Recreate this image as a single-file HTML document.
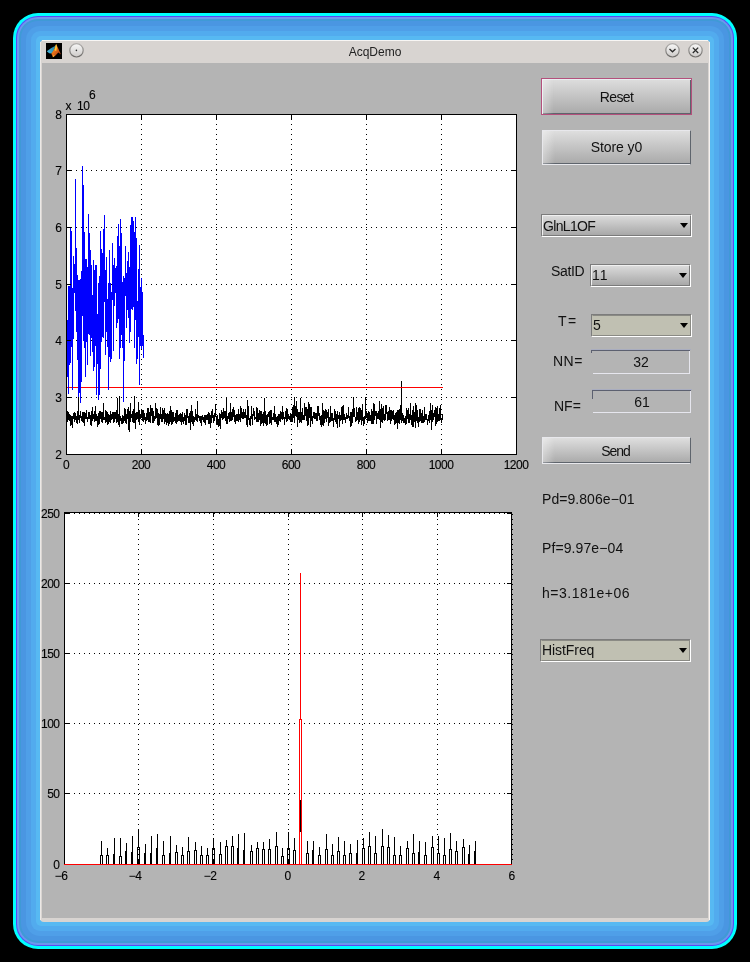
<!DOCTYPE html>
<html><head><meta charset="utf-8"><title>AcqDemo</title>
<style>
html,body{margin:0;padding:0;width:750px;height:962px;overflow:hidden;background:#000;}
body{position:relative;font-family:"Liberation Sans",sans-serif;}
.abs{position:absolute;}
.nolcd{will-change:transform;}
#glow{left:13px;top:13px;width:724px;height:936px;border-radius:25px;background:#00ffff;}
#glow2{left:3px;top:3px;right:3px;bottom:3px;border-radius:22px;background:#5a48f4;}
#glow3{left:1px;top:1px;right:1px;bottom:1px;border-radius:21px;background:#6c96ee;}
#glow4{left:2px;top:2px;right:2px;bottom:2px;border-radius:19px;background:#3f9ad6;}
#glow5{left:2px;top:2px;right:2px;bottom:2px;border-radius:17px;background:#4a96e2;}
#glow6{left:5px;top:5px;right:5px;bottom:5px;border-radius:14px;background:#4f9fe8;}
#glow7{left:5px;top:5px;right:5px;bottom:5px;border-radius:9px;background:#52abee;}
#glow8{left:5px;top:5px;right:5px;bottom:5px;border-radius:5px;background:#57b9f2;}
#frame{left:40px;top:40px;width:670px;height:882px;background:#d8d4d1;border-radius:4px;}
#frame::before{content:"";position:absolute;left:2px;right:2px;top:0;height:1px;background:#f8f6f4;}
#frame::after{content:"";position:absolute;left:0;right:0;top:2px;bottom:2px;border-left:1px solid #ece8e5;border-right:1px solid #f6f2f0;}
#title{left:0;top:1px;width:670px;height:23px;text-align:center;font-size:12px;line-height:22px;color:#222;}
#content{left:42px;top:63px;width:666px;height:855px;background:#b4b4b4;}
.plots{position:absolute;left:0;top:0;}
.g{stroke:#000;stroke-width:1;stroke-dasharray:1 4;shape-rendering:crispEdges;}
.gh{stroke:#000;stroke-width:1;stroke-dasharray:1 4;shape-rendering:crispEdges;}
.t{stroke:#000;stroke-width:1;shape-rendering:crispEdges;}
.lab text{font-family:"Liberation Sans",sans-serif;font-size:12px;letter-spacing:-0.5px;fill:#000;stroke:#000;stroke-width:0.12px;}
.btn{position:absolute;box-sizing:border-box;background:linear-gradient(#dedede,#a9a9a9);border-left:1px solid #e8e8ec;border-top:1px solid #e8e8ec;border-bottom:1px solid #5e646c;border-right:1px solid #5e646c;font-size:13px;color:#111;text-align:center;}
.btn::after{content:"";position:absolute;left:0;top:0;bottom:0;width:12px;background:linear-gradient(90deg,rgba(255,255,255,0.35),rgba(255,255,255,0));}
.pop{position:absolute;box-sizing:border-box;border-top:1px solid #7c7c7c;border-left:1px solid #7c7c7c;border-bottom:1px solid #fff;border-right:1px solid #fff;}
.pop .in{position:absolute;left:0;top:0;right:0;bottom:0;border-top:1px solid #f0f0f0;border-left:1px solid #f0f0f0;border-bottom:1px solid #7a7a7a;border-right:1px solid #7a7a7a;background:linear-gradient(#dadada,#a8a8a8);}
.pop.flat .in{background:#c0c0b2;border-top:1px solid #8a8a84;border-left:1px solid #c0c0b2;border-bottom:1px solid #8a8a84;border-right:1px solid #8a8a84;}
.pop .tx{position:absolute;left:2px;top:2px;font-size:13px;color:#000;line-height:14px;}
.arr{position:absolute;width:0;height:0;border-left:4.5px solid transparent;border-right:4.5px solid transparent;border-top:5px solid #000;}
.lbl{position:absolute;font-size:14px;color:#111;line-height:14px;white-space:nowrap;}
.bt{position:absolute;left:0;right:0;font-size:14px;line-height:14px;color:#111;text-align:center;white-space:nowrap;}
.edit{position:absolute;box-sizing:border-box;}
</style></head><body>
<div id="glow" class="abs"><div id="glow2" class="abs"><div id="glow3" class="abs"><div id="glow4" class="abs"><div id="glow5" class="abs"><div id="glow6" class="abs"><div id="glow7" class="abs"><div id="glow8" class="abs"></div></div></div></div></div></div></div></div>
<div id="frame" class="abs">
  <div id="title" class="abs nolcd">AcqDemo</div>
</div>
<!-- matlab icon -->
<svg class="abs" style="left:46px;top:43px" width="16" height="16" viewBox="0 0 16 16">
<defs>
<linearGradient id="og" x1="0" y1="0" x2="1" y2="1"><stop offset="0" stop-color="#ffd030"/><stop offset="0.45" stop-color="#e8701a"/><stop offset="1" stop-color="#a02808"/></linearGradient>
<linearGradient id="bg" x1="0" y1="1" x2="1" y2="0"><stop offset="0" stop-color="#48c0e8"/><stop offset="1" stop-color="#1e6e90"/></linearGradient>
</defs>
<rect width="16" height="16" fill="#000"/>
<path d="M0.8,8.3 L5.3,5.1 L9,3 L10.1,1.4 L8,7.3 L5.3,10.5 L3.2,10.3 Z" fill="url(#bg)"/>
<path d="M10.1,1.1 L12,5 L15,11.5 L12.3,9.4 L9.5,12.5 L6.9,14.2 L5.3,10.5 L8,6.7 Z" fill="url(#og)"/>
<path d="M10.1,1.1 L10.9,4 L10.2,8 L8.6,7.2 Z" fill="#ffd23a"/>
<path d="M6.9,14.2 L7.3,12.2 L8.8,12.8 Z" fill="#ffd040"/>
</svg>
<!-- title buttons -->
<svg class="abs" style="left:62px;top:40px" width="30" height="22" viewBox="0 0 30 22">
<defs><linearGradient id="cg" x1="0" y1="0" x2="0" y2="1"><stop offset="0" stop-color="#f8f8f8"/><stop offset="1" stop-color="#cdcac8"/></linearGradient>
<linearGradient id="cs" x1="0" y1="0" x2="0" y2="1"><stop offset="0" stop-color="#b0aeac"/><stop offset="1" stop-color="#6c6a68"/></linearGradient></defs>
<circle cx="14.5" cy="10.3" r="6.7" fill="url(#cg)" stroke="url(#cs)" stroke-width="1.2"/>
<circle cx="14.4" cy="10.4" r="0.8" fill="#333"/>
</svg>
<svg class="abs" style="left:660px;top:40px" width="48" height="22" viewBox="0 0 48 22">
<defs><linearGradient id="cg2" x1="0" y1="0" x2="0" y2="1"><stop offset="0" stop-color="#f8f8f8"/><stop offset="1" stop-color="#cdcac8"/></linearGradient>
<linearGradient id="cs2" x1="0" y1="0" x2="0" y2="1"><stop offset="0" stop-color="#b0aeac"/><stop offset="1" stop-color="#6c6a68"/></linearGradient></defs>
<circle cx="12.5" cy="10.3" r="6.7" fill="url(#cg2)" stroke="url(#cs2)" stroke-width="1.2"/>
<path d="M9.5,9 L12.5,11.8 L15.5,9" fill="none" stroke="#2a2a2a" stroke-width="1.3"/>
<circle cx="35.5" cy="10.3" r="6.7" fill="url(#cg2)" stroke="url(#cs2)" stroke-width="1.2"/>
<path d="M32.8,7.6 L38.2,13 M38.2,7.6 L32.8,13" fill="none" stroke="#2a2a2a" stroke-width="1.3"/>
</svg>
<div id="content" class="abs"></div>
<div class="nolcd abs" style="left:0;top:0;width:750px;height:962px"><svg class="plots" width="750" height="962" viewBox="0 0 750 962"><rect x="66" y="114" width="450" height="340" fill="#fff"/><rect x="64" y="512" width="447" height="352" fill="#fff"/><line x1="141.5" y1="114" x2="141.5" y2="454" class="g"/><line x1="216.5" y1="114" x2="216.5" y2="454" class="g"/><line x1="291.5" y1="114" x2="291.5" y2="454" class="g"/><line x1="366.5" y1="114" x2="366.5" y2="454" class="g"/><line x1="441.5" y1="114" x2="441.5" y2="454" class="g"/><line x1="66" y1="397.5" x2="516" y2="397.5" class="gh"/><line x1="66" y1="340.5" x2="516" y2="340.5" class="gh"/><line x1="66" y1="284.5" x2="516" y2="284.5" class="gh"/><line x1="66" y1="227.5" x2="516" y2="227.5" class="gh"/><line x1="66" y1="170.5" x2="516" y2="170.5" class="gh"/><polyline points="66.3,417.2 66.5,415.8 66.8,418.4 67.0,421.1 67.3,419.2 67.5,421.5 67.8,416.9 68.0,411.2 68.3,419.3 68.5,419.9 68.8,415.0 69.0,415.6 69.3,416.7 69.5,421.3 69.8,417.3 70.0,414.1 70.3,423.1 70.5,419.2 70.8,425.6 71.0,422.9 71.3,425.3 71.5,418.2 71.8,422.8 72.0,416.0 72.3,416.5 72.5,418.0 72.8,428.3 73.0,419.5 73.3,417.4 73.5,416.7 73.8,413.1 74.0,419.3 74.3,421.5 74.5,420.7 74.8,412.5 75.0,413.7 75.3,417.3 75.5,413.3 75.8,419.7 76.0,417.7 76.3,416.7 76.6,416.9 76.8,422.6 77.1,416.8 77.3,411.2 77.6,424.0 77.8,413.4 78.1,416.6 78.3,420.0 78.6,393.5 78.8,413.8 79.1,422.5 79.3,416.8 79.6,414.6 79.8,418.0 80.1,414.1 80.3,417.5 80.6,414.2 80.8,410.8 81.1,420.2 81.3,416.3 81.6,419.2 81.8,416.6 82.1,422.4 82.3,419.7 82.6,418.0 82.8,413.2 83.1,412.1 83.3,423.0 83.6,420.7 83.8,414.3 84.1,426.0 84.3,419.2 84.6,417.6 84.8,411.6 85.1,414.1 85.3,418.6 85.6,418.8 85.8,418.3 86.1,410.4 86.4,419.1 86.6,418.5 86.9,415.6 87.1,417.7 87.4,418.0 87.6,422.1 87.9,417.2 88.1,419.1 88.4,412.0 88.6,414.3 88.9,412.4 89.1,414.2 89.4,418.7 89.6,412.5 89.9,417.2 90.1,414.6 90.4,422.9 90.6,415.6 90.9,424.6 91.1,426.2 91.4,418.5 91.6,421.1 91.9,416.4 92.1,407.2 92.4,420.8 92.6,419.9 92.9,416.3 93.1,415.0 93.4,417.9 93.6,418.1 93.9,414.1 94.1,414.9 94.4,421.7 94.6,417.5 94.9,417.0 95.1,405.9 95.4,416.0 95.6,421.0 95.9,412.9 96.2,416.3 96.4,416.8 96.7,419.8 96.9,417.7 97.2,426.0 97.4,422.2 97.7,415.6 97.9,426.6 98.2,413.4 98.4,424.9 98.7,413.8 98.9,420.9 99.2,413.7 99.4,416.6 99.7,424.0 99.9,411.6 100.2,410.8 100.4,417.5 100.7,418.4 100.9,417.9 101.2,421.5 101.4,412.3 101.7,414.4 101.9,417.4 102.2,420.7 102.4,419.9 102.7,422.8 102.9,411.6 103.2,417.8 103.4,412.9 103.7,402.8 103.9,420.2 104.2,418.6 104.4,419.6 104.7,417.1 104.9,418.8 105.2,418.5 105.4,423.3 105.7,420.7 105.9,409.9 106.2,420.1 106.5,421.8 106.7,415.7 107.0,410.9 107.2,423.6 107.5,418.1 107.7,420.0 108.0,425.0 108.2,413.9 108.5,417.3 108.7,416.9 109.0,420.5 109.2,415.2 109.5,419.6 109.7,417.8 110.0,422.1 110.2,422.5 110.5,411.3 110.7,419.4 111.0,415.9 111.2,417.3 111.5,419.1 111.7,419.4 112.0,414.4 112.2,418.5 112.5,417.8 112.7,417.1 113.0,412.0 113.2,414.2 113.5,415.5 113.7,419.7 114.0,423.3 114.2,413.0 114.5,412.9 114.7,417.8 115.0,414.8 115.2,413.7 115.5,413.5 115.7,413.1 116.0,419.2 116.2,410.5 116.5,422.7 116.8,413.4 117.0,415.0 117.3,413.3 117.5,398.4 117.8,410.6 118.0,422.2 118.3,424.6 118.5,413.6 118.8,421.7 119.0,417.2 119.3,396.1 119.5,424.4 119.8,426.5 120.0,416.0 120.3,417.0 120.5,418.3 120.8,417.0 121.0,421.0 121.3,423.9 121.5,417.9 121.8,421.5 122.0,424.4 122.3,414.9 122.5,417.4 122.8,415.4 123.0,421.5 123.3,420.1 123.5,421.6 123.8,421.1 124.0,416.3 124.3,420.6 124.5,415.6 124.8,415.7 125.0,408.2 125.3,423.3 125.5,413.2 125.8,417.6 126.0,417.2 126.3,423.6 126.6,419.2 126.8,413.9 127.1,417.5 127.3,416.8 127.6,418.5 127.8,412.1 128.1,407.0 128.3,426.9 128.6,420.2 128.8,425.9 129.1,431.5 129.3,419.5 129.6,411.3 129.8,417.0 130.1,422.3 130.3,403.5 130.6,412.2 130.8,416.5 131.1,417.0 131.3,417.4 131.6,417.0 131.8,413.6 132.1,414.7 132.3,416.2 132.6,421.8 132.8,414.9 133.1,409.5 133.3,412.3 133.6,422.8 133.8,417.8 134.1,417.2 134.3,423.0 134.6,409.6 134.8,395.6 135.1,419.2 135.3,413.8 135.6,415.5 135.8,428.7 136.1,416.1 136.4,417.4 136.6,416.8 136.9,412.4 137.1,418.4 137.4,418.0 137.6,411.9 137.9,415.7 138.1,417.2 138.4,402.5 138.6,419.6 138.9,418.9 139.1,425.2 139.4,410.2 139.6,412.9 139.9,413.1 140.1,414.2 140.4,416.7 140.6,416.2 140.9,418.3 141.1,418.1 141.4,416.9 141.6,410.5 141.9,414.7 142.1,417.4 142.4,419.7 142.6,420.0 142.9,410.1 143.1,414.9 143.4,410.0 143.6,418.7 143.9,422.1 144.1,417.5 144.4,413.3 144.6,418.9 144.9,418.2 145.1,418.1 145.4,416.7 145.6,424.2 145.9,418.2 146.1,420.9 146.4,413.3 146.7,420.6 146.9,414.6 147.2,410.4 147.4,408.1 147.7,419.8 147.9,416.3 148.2,417.2 148.4,421.6 148.7,415.1 148.9,408.3 149.2,418.3 149.4,418.1 149.7,421.8 149.9,415.8 150.2,422.7 150.4,422.1 150.7,411.5 150.9,404.6 151.2,412.4 151.4,410.4 151.7,416.0 151.9,414.7 152.2,408.5 152.4,418.0 152.7,419.8 152.9,423.1 153.2,417.0 153.4,410.6 153.7,412.9 153.9,421.3 154.2,420.9 154.4,419.4 154.7,415.9 154.9,418.1 155.2,416.2 155.4,415.9 155.7,418.5 155.9,403.3 156.2,416.3 156.5,417.5 156.7,414.9 157.0,408.9 157.2,414.6 157.5,416.9 157.7,424.6 158.0,415.5 158.2,425.8 158.5,423.4 158.7,413.4 159.0,414.0 159.2,417.8 159.5,424.7 159.7,418.8 160.0,420.2 160.2,414.4 160.5,407.2 160.7,416.2 161.0,413.3 161.2,422.3 161.5,417.4 161.7,417.9 162.0,422.3 162.2,408.4 162.5,422.3 162.7,412.3 163.0,412.5 163.2,412.4 163.5,419.3 163.7,409.8 164.0,417.8 164.2,418.9 164.5,418.7 164.7,408.4 165.0,423.5 165.2,413.7 165.5,418.0 165.7,416.2 166.0,412.7 166.2,424.8 166.5,420.6 166.8,416.4 167.0,415.4 167.3,418.8 167.5,412.6 167.8,416.2 168.0,422.5 168.3,421.3 168.5,413.6 168.8,415.1 169.0,425.6 169.3,411.2 169.5,414.5 169.8,411.2 170.0,418.9 170.3,418.5 170.5,422.1 170.8,406.0 171.0,417.9 171.3,410.1 171.5,420.0 171.8,416.4 172.0,424.6 172.3,418.9 172.5,412.8 172.8,422.7 173.0,412.4 173.3,415.7 173.5,421.8 173.8,411.8 174.0,419.2 174.3,417.4 174.5,419.5 174.8,420.8 175.0,418.5 175.3,421.7 175.5,422.9 175.8,417.4 176.0,413.3 176.3,423.9 176.6,410.4 176.8,420.0 177.1,421.5 177.3,413.4 177.6,419.5 177.8,410.5 178.1,420.6 178.3,415.5 178.6,418.2 178.8,420.5 179.1,414.6 179.3,417.9 179.6,414.5 179.8,417.4 180.1,422.0 180.3,417.6 180.6,416.9 180.8,412.9 181.1,421.2 181.3,417.3 181.6,424.8 181.8,414.3 182.1,421.9 182.3,415.0 182.6,417.4 182.8,412.3 183.1,423.9 183.3,422.0 183.6,420.5 183.8,422.2 184.1,415.5 184.3,420.7 184.6,413.2 184.8,414.6 185.1,420.5 185.3,415.3 185.6,421.5 185.8,422.5 186.1,425.3 186.3,408.9 186.6,418.6 186.9,416.1 187.1,417.3 187.4,416.5 187.6,416.9 187.9,408.7 188.1,421.8 188.4,415.9 188.6,421.6 188.9,423.1 189.1,413.9 189.4,413.5 189.6,421.4 189.9,423.3 190.1,418.7 190.4,411.0 190.6,429.6 190.9,414.8 191.1,421.9 191.4,412.6 191.6,405.1 191.9,418.4 192.1,423.8 192.4,421.5 192.6,411.0 192.9,413.5 193.1,418.9 193.4,421.0 193.6,425.5 193.9,418.9 194.1,417.3 194.4,417.5 194.6,417.6 194.9,422.1 195.1,417.5 195.4,417.3 195.6,411.5 195.9,408.9 196.1,417.8 196.4,420.6 196.7,417.5 196.9,419.9 197.2,420.4 197.4,401.5 197.7,421.8 197.9,414.5 198.2,417.6 198.4,416.1 198.7,418.0 198.9,415.1 199.2,421.4 199.4,418.2 199.7,419.6 199.9,416.1 200.2,417.2 200.4,423.2 200.7,416.9 200.9,423.1 201.2,419.9 201.4,418.5 201.7,426.3 201.9,416.8 202.2,416.5 202.4,417.9 202.7,419.0 202.9,418.8 203.2,421.5 203.4,418.4 203.7,419.6 203.9,416.8 204.2,422.5 204.4,416.1 204.7,416.5 204.9,417.8 205.2,419.1 205.4,414.7 205.7,424.5 205.9,415.1 206.2,416.1 206.4,415.9 206.7,415.5 207.0,420.1 207.2,418.3 207.5,414.4 207.7,415.3 208.0,416.3 208.2,423.9 208.5,414.8 208.7,412.0 209.0,412.7 209.2,416.1 209.5,424.1 209.7,413.0 210.0,417.8 210.2,428.4 210.5,415.5 210.7,416.1 211.0,422.9 211.2,420.0 211.5,411.5 211.7,418.8 212.0,416.0 212.2,409.4 212.5,410.1 212.7,417.6 213.0,418.2 213.2,422.7 213.5,420.2 213.7,415.3 214.0,415.4 214.2,416.7 214.5,412.8 214.7,420.6 215.0,417.4 215.2,413.9 215.5,414.6 215.7,403.9 216.0,415.4 216.2,418.5 216.5,415.6 216.8,421.6 217.0,424.4 217.3,414.6 217.5,417.4 217.8,415.8 218.0,424.7 218.3,418.8 218.5,419.8 218.8,421.0 219.0,427.1 219.3,418.6 219.5,413.2 219.8,415.5 220.0,419.8 220.3,417.2 220.5,413.8 220.8,429.4 221.0,417.7 221.3,414.8 221.5,414.2 221.8,409.6 222.0,412.1 222.3,415.8 222.5,415.8 222.8,413.7 223.0,419.6 223.3,417.3 223.5,413.2 223.8,408.5 224.0,417.9 224.3,417.4 224.5,416.3 224.8,411.2 225.0,417.3 225.3,410.7 225.5,421.4 225.8,418.0 226.0,418.0 226.3,402.4 226.5,398.4 226.8,423.8 227.1,421.2 227.3,415.7 227.6,420.1 227.8,423.9 228.1,412.6 228.3,415.0 228.6,415.0 228.8,419.3 229.1,412.6 229.3,418.2 229.6,412.3 229.8,421.2 230.1,420.9 230.3,416.3 230.6,420.3 230.8,403.5 231.1,416.0 231.3,421.2 231.6,416.8 231.8,418.7 232.1,413.1 232.3,420.0 232.6,411.1 232.8,411.8 233.1,407.3 233.3,408.3 233.6,416.9 233.8,416.2 234.1,410.4 234.3,417.7 234.6,421.5 234.8,416.7 235.1,415.2 235.3,420.8 235.6,424.4 235.8,423.5 236.1,414.2 236.3,420.5 236.6,417.8 236.8,416.2 237.1,414.4 237.4,418.6 237.6,415.0 237.9,421.1 238.1,409.2 238.4,421.7 238.6,412.2 238.9,417.3 239.1,420.4 239.4,418.7 239.6,418.1 239.9,414.1 240.1,417.5 240.4,421.8 240.6,418.8 240.9,406.0 241.1,412.9 241.4,417.7 241.6,414.0 241.9,408.1 242.1,418.2 242.4,418.8 242.6,411.8 242.9,415.0 243.1,414.2 243.4,419.4 243.6,408.7 243.9,409.6 244.1,414.7 244.4,414.1 244.6,418.0 244.9,414.3 245.1,418.0 245.4,415.2 245.6,414.2 245.9,409.3 246.1,424.6 246.4,415.5 246.6,420.4 246.9,418.6 247.2,419.8 247.4,411.5 247.7,427.4 247.9,400.3 248.2,416.0 248.4,412.3 248.7,408.4 248.9,417.1 249.2,425.1 249.4,421.1 249.7,422.5 249.9,419.4 250.2,416.8 250.4,426.0 250.7,415.7 250.9,423.8 251.2,406.1 251.4,417.7 251.7,418.6 251.9,417.5 252.2,419.6 252.4,419.9 252.7,424.6 252.9,417.3 253.2,409.0 253.4,408.4 253.7,411.3 253.9,414.0 254.2,420.2 254.4,410.8 254.7,417.4 254.9,417.5 255.2,418.5 255.4,416.8 255.7,419.1 255.9,417.5 256.2,422.0 256.4,418.8 256.7,407.1 257.0,417.5 257.2,418.2 257.5,408.0 257.7,414.0 258.0,422.1 258.2,418.1 258.5,413.1 258.7,416.0 259.0,416.6 259.2,410.3 259.5,420.2 259.7,416.8 260.0,419.5 260.2,410.6 260.5,425.8 260.7,412.9 261.0,419.5 261.2,414.2 261.5,414.5 261.7,411.0 262.0,424.1 262.2,413.8 262.5,418.5 262.7,420.1 263.0,414.8 263.2,412.0 263.5,426.3 263.7,418.8 264.0,423.8 264.2,420.0 264.5,398.3 264.7,415.8 265.0,410.2 265.2,418.0 265.5,423.9 265.7,420.5 266.0,421.2 266.2,422.5 266.5,415.2 266.7,420.0 267.0,425.9 267.3,414.1 267.5,417.7 267.8,415.6 268.0,416.7 268.3,414.4 268.5,417.0 268.8,411.7 269.0,415.3 269.3,415.4 269.5,415.4 269.8,423.6 270.0,411.3 270.3,418.3 270.5,416.2 270.8,423.2 271.0,409.9 271.3,416.7 271.5,422.5 271.8,424.7 272.0,418.4 272.3,417.6 272.5,420.3 272.8,416.8 273.0,420.0 273.3,414.7 273.5,420.4 273.8,417.3 274.0,412.8 274.3,405.8 274.5,421.6 274.8,419.2 275.0,420.9 275.3,413.7 275.5,422.2 275.8,419.3 276.0,417.3 276.3,421.5 276.5,421.4 276.8,419.3 277.1,426.5 277.3,423.6 277.6,419.0 277.8,416.5 278.1,418.0 278.3,425.0 278.6,419.2 278.8,413.6 279.1,414.7 279.3,417.5 279.6,421.1 279.8,414.4 280.1,419.7 280.3,422.3 280.6,420.7 280.8,410.8 281.1,416.2 281.3,412.0 281.6,419.3 281.8,413.0 282.1,419.8 282.3,417.9 282.6,406.2 282.8,413.8 283.1,419.4 283.3,417.5 283.6,415.7 283.8,411.8 284.1,419.3 284.3,424.9 284.6,418.4 284.8,417.1 285.1,416.7 285.3,411.3 285.6,411.1 285.8,413.6 286.1,422.0 286.3,413.3 286.6,407.9 286.8,413.8 287.1,416.0 287.4,416.5 287.6,409.3 287.9,421.3 288.1,417.7 288.4,415.1 288.6,413.9 288.9,419.1 289.1,415.8 289.4,418.4 289.6,416.6 289.9,417.8 290.1,422.2 290.4,417.3 290.6,413.3 290.9,421.4 291.1,418.2 291.4,414.2 291.6,421.9 291.9,416.4 292.1,421.9 292.4,412.2 292.6,406.9 292.9,408.2 293.1,418.1 293.4,413.9 293.6,416.6 293.9,416.7 294.1,396.6 294.4,423.0 294.6,407.7 294.9,417.4 295.1,410.9 295.4,416.3 295.6,406.0 295.9,415.9 296.1,413.9 296.4,417.0 296.6,415.0 296.9,401.4 297.2,426.6 297.4,413.2 297.7,414.1 297.9,408.6 298.2,416.9 298.4,412.6 298.7,419.2 298.9,420.3 299.2,418.0 299.4,411.9 299.7,423.3 299.9,411.9 300.2,420.0 300.4,422.0 300.7,398.3 300.9,417.6 301.2,422.9 301.4,418.8 301.7,413.1 301.9,411.9 302.2,419.1 302.4,415.4 302.7,407.8 302.9,420.0 303.2,415.6 303.4,417.3 303.7,419.5 303.9,419.3 304.2,406.9 304.4,417.0 304.7,419.7 304.9,403.1 305.2,412.2 305.4,416.2 305.7,413.3 305.9,411.9 306.2,414.6 306.4,407.1 306.7,420.8 306.9,413.6 307.2,418.6 307.5,409.0 307.7,409.7 308.0,425.8 308.2,421.4 308.5,414.2 308.7,413.7 309.0,402.2 309.2,417.5 309.5,415.2 309.7,414.3 310.0,417.5 310.2,407.2 310.5,427.2 310.7,414.4 311.0,421.7 311.2,412.9 311.5,418.2 311.7,406.6 312.0,415.5 312.2,421.2 312.5,421.2 312.7,424.1 313.0,417.3 313.2,415.0 313.5,412.6 313.7,417.8 314.0,412.5 314.2,417.1 314.5,417.6 314.7,414.6 315.0,412.5 315.2,418.7 315.5,418.2 315.7,417.9 316.0,416.8 316.2,421.1 316.5,412.6 316.7,418.9 317.0,415.1 317.2,420.8 317.5,415.6 317.8,415.4 318.0,405.6 318.3,408.2 318.5,415.5 318.8,409.3 319.0,412.9 319.3,420.1 319.5,418.9 319.8,415.2 320.0,416.9 320.3,416.9 320.5,418.4 320.8,425.2 321.0,418.2 321.3,427.0 321.5,415.5 321.8,420.4 322.0,420.3 322.3,418.1 322.5,402.6 322.8,423.5 323.0,424.9 323.3,421.9 323.5,426.2 323.8,421.4 324.0,410.1 324.3,421.8 324.5,414.3 324.8,423.2 325.0,415.8 325.3,418.6 325.5,417.4 325.8,414.7 326.0,409.4 326.3,416.3 326.5,416.6 326.8,421.5 327.0,414.6 327.3,418.3 327.6,413.5 327.8,417.4 328.1,409.5 328.3,425.9 328.6,418.5 328.8,413.3 329.1,418.7 329.3,420.7 329.6,418.3 329.8,423.3 330.1,416.6 330.3,406.4 330.6,412.1 330.8,422.1 331.1,421.0 331.3,419.0 331.6,412.7 331.8,420.8 332.1,420.2 332.3,413.3 332.6,413.3 332.8,418.8 333.1,422.1 333.3,424.0 333.6,420.3 333.8,427.0 334.1,413.9 334.3,420.0 334.6,415.0 334.8,408.9 335.1,412.0 335.3,422.3 335.6,413.3 335.8,412.0 336.1,420.5 336.3,421.4 336.6,417.7 336.8,424.2 337.1,410.7 337.4,427.8 337.6,422.1 337.9,418.4 338.1,418.2 338.4,416.4 338.6,416.0 338.9,418.1 339.1,412.1 339.4,426.6 339.6,417.2 339.9,420.3 340.1,416.6 340.4,416.2 340.6,421.2 340.9,420.0 341.1,413.7 341.4,415.6 341.6,420.2 341.9,408.2 342.1,407.0 342.4,423.6 342.6,415.8 342.9,406.1 343.1,405.2 343.4,416.2 343.6,418.1 343.9,419.6 344.1,418.1 344.4,419.6 344.6,413.9 344.9,418.9 345.1,419.1 345.4,422.5 345.6,417.4 345.9,421.1 346.1,418.0 346.4,412.6 346.6,415.5 346.9,414.9 347.1,415.6 347.4,416.9 347.7,417.7 347.9,418.5 348.2,413.8 348.4,406.8 348.7,411.2 348.9,417.0 349.2,420.5 349.4,419.3 349.7,420.2 349.9,416.5 350.2,420.3 350.4,412.1 350.7,420.6 350.9,427.2 351.2,420.4 351.4,426.0 351.7,417.3 351.9,412.5 352.2,414.3 352.4,423.1 352.7,420.5 352.9,409.3 353.2,415.8 353.4,417.1 353.7,397.4 353.9,406.3 354.2,411.4 354.4,416.6 354.7,415.6 354.9,414.4 355.2,419.9 355.4,421.8 355.7,416.9 355.9,421.4 356.2,417.4 356.4,416.7 356.7,406.8 356.9,420.9 357.2,417.7 357.4,417.9 357.7,415.2 358.0,412.5 358.2,419.3 358.5,420.8 358.7,424.4 359.0,407.6 359.2,414.8 359.5,417.0 359.7,421.7 360.0,407.2 360.2,417.0 360.5,414.9 360.7,419.8 361.0,418.3 361.2,425.2 361.5,422.3 361.7,410.0 362.0,422.0 362.2,404.3 362.5,416.2 362.7,418.8 363.0,420.7 363.2,417.4 363.5,417.2 363.7,417.5 364.0,425.5 364.2,417.8 364.5,420.9 364.7,419.6 365.0,416.2 365.2,414.3 365.5,397.2 365.7,419.4 366.0,413.1 366.2,412.0 366.5,412.1 366.7,411.0 367.0,417.8 367.2,417.9 367.5,413.5 367.8,423.2 368.0,416.2 368.3,419.5 368.5,418.8 368.8,411.0 369.0,421.1 369.3,417.3 369.5,413.2 369.8,412.8 370.0,417.5 370.3,418.0 370.5,420.8 370.8,415.4 371.0,418.3 371.3,414.5 371.5,409.4 371.8,417.3 372.0,423.8 372.3,421.0 372.5,423.6 372.8,422.5 373.0,411.4 373.3,416.2 373.5,423.9 373.8,414.3 374.0,403.5 374.3,418.8 374.5,420.2 374.8,418.7 375.0,415.9 375.3,414.3 375.5,411.9 375.8,411.8 376.0,411.9 376.3,411.1 376.5,414.2 376.8,423.9 377.0,417.7 377.3,415.8 377.6,418.9 377.8,413.1 378.1,418.8 378.3,415.5 378.6,410.8 378.8,414.2 379.1,416.2 379.3,413.1 379.6,412.5 379.8,401.0 380.1,428.0 380.3,412.2 380.6,419.2 380.8,421.5 381.1,403.8 381.3,411.9 381.6,419.3 381.8,422.2 382.1,408.2 382.3,419.2 382.6,422.6 382.8,416.1 383.1,415.3 383.3,420.3 383.6,413.7 383.8,405.9 384.1,421.2 384.3,416.4 384.6,413.8 384.8,420.0 385.1,415.7 385.3,417.6 385.6,404.7 385.8,420.3 386.1,411.0 386.3,409.4 386.6,405.3 386.8,414.0 387.1,413.2 387.3,411.6 387.6,415.7 387.9,419.8 388.1,419.5 388.4,414.9 388.6,414.6 388.9,411.0 389.1,415.3 389.4,407.5 389.6,410.5 389.9,416.4 390.1,423.7 390.4,422.4 390.6,423.5 390.9,410.1 391.1,420.9 391.4,411.7 391.6,414.6 391.9,409.6 392.1,412.7 392.4,417.6 392.6,418.1 392.9,416.8 393.1,416.4 393.4,419.5 393.6,411.0 393.9,410.1 394.1,424.7 394.4,416.0 394.6,421.2 394.9,416.3 395.1,413.5 395.4,417.4 395.6,413.8 395.9,424.2 396.1,412.3 396.4,419.8 396.6,414.4 396.9,416.4 397.1,428.6 397.4,420.5 397.7,416.2 397.9,410.3 398.2,415.9 398.4,416.0 398.7,423.4 398.9,410.8 399.2,409.2 399.4,417.0 399.7,418.1 399.9,424.3 400.2,413.3 400.4,405.2 400.7,414.0 400.9,411.6 401.2,414.8 401.4,421.5 401.7,381.5 401.9,422.6 402.2,418.1 402.4,415.9 402.7,413.3 402.9,415.3 403.2,415.5 403.4,420.5 403.7,422.9 403.9,416.9 404.2,420.3 404.4,422.9 404.7,422.8 404.9,419.3 405.2,425.4 405.4,423.1 405.7,424.4 405.9,416.4 406.2,415.4 406.4,408.3 406.7,423.8 406.9,420.2 407.2,413.1 407.4,418.1 407.7,418.6 408.0,409.6 408.2,418.7 408.5,408.1 408.7,423.0 409.0,415.7 409.2,415.8 409.5,423.2 409.7,421.5 410.0,414.8 410.2,403.0 410.5,420.0 410.7,414.4 411.0,414.6 411.2,425.0 411.5,418.5 411.7,415.3 412.0,419.7 412.2,426.6 412.5,418.4 412.7,413.8 413.0,410.2 413.2,426.8 413.5,405.6 413.7,408.6 414.0,412.9 414.2,411.7 414.5,412.8 414.7,416.5 415.0,422.3 415.2,402.6 415.5,420.3 415.7,428.3 416.0,404.7 416.2,414.0 416.5,409.1 416.7,421.2 417.0,410.7 417.2,410.1 417.5,410.3 417.8,417.3 418.0,422.5 418.3,418.0 418.5,426.9 418.8,424.7 419.0,416.8 419.3,421.5 419.5,417.9 419.8,417.6 420.0,408.6 420.3,411.4 420.5,417.4 420.8,411.8 421.0,420.6 421.3,418.7 421.5,413.1 421.8,422.7 422.0,418.4 422.3,423.0 422.5,416.6 422.8,410.0 423.0,420.5 423.3,416.2 423.5,421.1 423.8,422.2 424.0,422.6 424.3,410.7 424.5,406.7 424.8,415.0 425.0,420.3 425.3,414.1 425.5,418.6 425.8,413.6 426.0,415.9 426.3,415.9 426.5,414.5 426.8,419.7 427.0,419.0 427.3,424.8 427.5,419.1 427.8,423.5 428.1,417.8 428.3,421.4 428.6,416.7 428.8,415.2 429.1,423.4 429.3,420.8 429.6,421.3 429.8,413.9 430.1,409.6 430.3,413.4 430.6,403.1 430.8,410.7 431.1,423.9 431.3,410.5 431.6,420.1 431.8,429.5 432.1,405.5 432.3,410.2 432.6,421.7 432.8,416.4 433.1,418.1 433.3,416.7 433.6,412.7 433.8,420.2 434.1,415.1 434.3,416.2 434.6,411.9 434.8,416.8 435.1,406.8 435.3,420.3 435.6,416.0 435.8,425.6 436.1,422.7 436.3,411.3 436.6,421.3 436.8,414.8 437.1,405.6 437.3,421.8 437.6,418.7 437.9,419.4 438.1,419.3 438.4,413.8 438.6,414.3 438.9,419.7 439.1,421.2 439.4,415.9 439.6,417.6 439.9,412.6 440.1,405.4 440.4,413.4 440.6,417.3 440.9,417.9 441.1,421.0 441.4,421.2 441.6,421.6 441.9,418.9 442.1,419.1 442.4,413.9 442.6,418.9 442.9,418.0" fill="none" stroke="#000" stroke-width="1" shape-rendering="crispEdges"/><line x1="66" y1="387.5" x2="443" y2="387.5" stroke="#f00" stroke-width="1" shape-rendering="crispEdges"/><polyline points="66.3,325.1 66.6,274.7 66.8,366.5 67.1,377.3 67.4,359.3 67.7,323.4 67.9,319.9 68.2,327.7 68.5,302.6 68.8,393.8 69.0,286.5 69.3,364.6 69.6,333.6 69.9,323.5 70.2,353.8 70.4,362.6 70.7,347.7 71.0,227.8 71.3,282.6 71.5,283.6 71.8,347.2 72.1,339.0 72.4,344.2 72.7,288.3 72.9,389.8 73.2,256.1 73.5,326.4 73.8,338.6 74.0,292.8 74.3,264.5 74.6,292.7 74.9,263.7 75.1,301.2 75.4,179.4 75.7,255.9 76.0,310.7 76.3,247.9 76.5,299.9 76.8,303.1 77.1,344.3 77.4,318.4 77.6,274.9 77.9,360.2 78.2,280.2 78.5,292.4 78.8,295.3 79.0,396.7 79.3,310.9 79.6,280.2 79.9,337.8 80.1,303.0 80.4,403.0 80.7,279.3 81.0,333.7 81.2,271.1 81.5,381.9 81.8,278.4 82.1,316.3 82.4,273.7 82.6,266.4 82.9,166.1 83.2,215.2 83.5,340.5 83.7,301.4 84.0,231.9 84.3,348.4 84.6,258.1 84.9,236.3 85.1,335.4 85.4,377.1 85.7,258.8 86.0,261.4 86.2,273.1 86.5,259.5 86.8,342.1 87.1,313.5 87.3,363.1 87.6,364.5 87.9,266.6 88.2,334.1 88.5,213.7 88.7,303.6 89.0,332.8 89.3,274.1 89.6,233.2 89.8,286.8 90.1,356.3 90.4,291.5 90.7,250.5 91.0,326.8 91.2,338.2 91.5,265.2 91.8,301.0 92.1,351.7 92.3,322.2 92.6,337.5 92.9,294.6 93.2,302.2 93.4,259.7 93.7,277.7 94.0,370.5 94.3,290.1 94.6,270.1 94.8,288.1 95.1,264.6 95.4,329.1 95.7,345.5 95.9,268.7 96.2,265.7 96.5,394.8 96.8,264.8 97.1,336.2 97.3,319.2 97.6,363.7 97.9,360.7 98.2,283.5 98.4,321.4 98.7,291.6 99.0,400.4 99.3,276.0 99.5,354.9 99.8,282.9 100.1,279.0 100.4,309.7 100.7,369.4 100.9,231.4 101.2,341.8 101.5,296.6 101.8,298.5 102.0,249.1 102.3,325.3 102.6,265.5 102.9,336.9 103.1,260.9 103.4,337.8 103.7,321.4 104.0,229.3 104.3,228.3 104.5,302.2 104.8,215.2 105.1,291.9 105.4,340.0 105.6,276.7 105.9,354.9 106.2,260.6 106.5,257.5 106.8,330.0 107.0,332.3 107.3,299.5 107.6,306.1 107.9,346.6 108.1,283.5 108.4,390.0 108.7,324.3 109.0,323.1 109.2,249.9 109.5,294.1 109.8,356.8 110.1,282.7 110.4,314.0 110.6,333.2 110.9,362.4 111.2,354.9 111.5,292.0 111.7,346.0 112.0,304.0 112.3,263.3 112.6,264.5 112.9,243.0 113.1,318.8 113.4,350.9 113.7,265.0 114.0,294.0 114.2,260.8 114.5,306.2 114.8,257.9 115.1,272.1 115.3,277.4 115.6,286.1 115.9,290.4 116.2,297.2 116.5,297.4 116.7,266.3 117.0,327.6 117.3,235.9 117.6,311.0 117.8,266.5 118.1,310.3 118.4,316.7 118.7,223.8 119.0,319.3 119.2,358.8 119.5,335.8 119.8,319.6 120.1,218.7 120.3,298.2 120.6,268.5 120.9,347.5 121.2,292.3 121.4,279.3 121.7,233.2 122.0,335.1 122.3,282.0 122.6,294.3 122.8,348.4 123.1,276.4 123.4,317.4 123.7,401.5 123.9,282.2 124.2,284.6 124.5,324.6 124.8,361.3 125.1,246.3 125.3,295.8 125.6,265.2 125.9,249.1 126.2,327.9 126.4,273.5 126.7,316.5 127.0,309.2 127.3,310.2 127.5,306.7 127.8,261.2 128.1,301.6 128.4,312.9 128.7,317.9 128.9,251.9 129.2,343.2 129.5,327.2 129.8,308.8 130.0,267.3 130.3,311.5 130.6,331.6 130.9,224.9 131.1,252.4 131.4,288.3 131.7,308.9 132.0,217.3 132.3,293.5 132.5,310.2 132.8,294.3 133.1,294.2 133.4,249.1 133.6,307.4 133.9,221.0 134.2,342.7 134.5,278.3 134.8,347.5 135.0,232.5 135.3,320.2 135.6,309.0 135.9,216.8 136.1,255.4 136.4,352.0 136.7,320.8 137.0,363.6 137.2,301.1 137.5,310.8 137.8,320.9 138.1,334.6 138.4,322.4 138.6,337.1 138.9,285.1 139.2,244.8 139.5,385.4 139.7,311.4 140.0,323.7 140.3,286.6 140.6,345.5 140.9,312.6 141.1,349.1 141.4,278.2 141.7,302.6 142.0,313.3 142.2,291.6 142.5,316.7 142.8,323.7 143.1,354.8 143.3,335.0 143.6,357.7" fill="none" stroke="#00f" stroke-width="1" shape-rendering="crispEdges"/><line x1="141.5" y1="454" x2="141.5" y2="449" class="t"/><line x1="141.5" y1="114" x2="141.5" y2="119" class="t"/><line x1="216.5" y1="454" x2="216.5" y2="449" class="t"/><line x1="216.5" y1="114" x2="216.5" y2="119" class="t"/><line x1="291.5" y1="454" x2="291.5" y2="449" class="t"/><line x1="291.5" y1="114" x2="291.5" y2="119" class="t"/><line x1="366.5" y1="454" x2="366.5" y2="449" class="t"/><line x1="366.5" y1="114" x2="366.5" y2="119" class="t"/><line x1="441.5" y1="454" x2="441.5" y2="449" class="t"/><line x1="441.5" y1="114" x2="441.5" y2="119" class="t"/><line x1="66" y1="397.5" x2="71" y2="397.5" class="t"/><line x1="516" y1="397.5" x2="511" y2="397.5" class="t"/><line x1="66" y1="340.5" x2="71" y2="340.5" class="t"/><line x1="516" y1="340.5" x2="511" y2="340.5" class="t"/><line x1="66" y1="284.5" x2="71" y2="284.5" class="t"/><line x1="516" y1="284.5" x2="511" y2="284.5" class="t"/><line x1="66" y1="227.5" x2="71" y2="227.5" class="t"/><line x1="516" y1="227.5" x2="511" y2="227.5" class="t"/><line x1="66" y1="170.5" x2="71" y2="170.5" class="t"/><line x1="516" y1="170.5" x2="511" y2="170.5" class="t"/><rect x="66.5" y="114.5" width="450" height="340" fill="none" stroke="#000" stroke-width="1" shape-rendering="crispEdges"/><line x1="138.5" y1="514" x2="138.5" y2="864" class="g"/><line x1="213.5" y1="514" x2="213.5" y2="864" class="g"/><line x1="288.5" y1="514" x2="288.5" y2="864" class="g"/><line x1="362.5" y1="514" x2="362.5" y2="864" class="g"/><line x1="437.5" y1="514" x2="437.5" y2="864" class="g"/><line x1="512.5" y1="514" x2="512.5" y2="864" class="g"/><line x1="64" y1="793.5" x2="513" y2="793.5" class="gh"/><line x1="64" y1="723.5" x2="513" y2="723.5" class="gh"/><line x1="64" y1="653.5" x2="513" y2="653.5" class="gh"/><line x1="64" y1="583.5" x2="513" y2="583.5" class="gh"/><line x1="64" y1="513.5" x2="513" y2="513.5" class="gh"/><g shape-rendering="crispEdges"><rect x="100.5" y="855.5" width="2" height="9" fill="none" stroke="#000"/><line x1="101.5" y1="841" x2="101.5" y2="856" stroke="#000"/><rect x="106.5" y="855.5" width="2" height="9" fill="none" stroke="#000"/><line x1="107.5" y1="848" x2="107.5" y2="856" stroke="#000"/><rect x="113" y="854" width="2" height="10" fill="#000"/><line x1="114.5" y1="838" x2="114.5" y2="854" stroke="#000"/><rect x="119.5" y="856.5" width="2" height="8" fill="none" stroke="#000"/><line x1="120.5" y1="838" x2="120.5" y2="857" stroke="#000"/><rect x="125" y="851" width="2" height="13" fill="#000"/><line x1="126.5" y1="843" x2="126.5" y2="852" stroke="#000"/><rect x="131" y="852" width="2" height="12" fill="#000"/><line x1="132.5" y1="836" x2="132.5" y2="853" stroke="#000"/><rect x="137.5" y="847.5" width="2" height="17" fill="none" stroke="#000"/><line x1="138.5" y1="829" x2="138.5" y2="848" stroke="#000"/><rect x="144" y="853" width="2" height="11" fill="#000"/><line x1="145.5" y1="844" x2="145.5" y2="853" stroke="#000"/><rect x="150" y="853" width="2" height="11" fill="#000"/><line x1="151.5" y1="836" x2="151.5" y2="854" stroke="#000"/><rect x="156" y="848" width="2" height="16" fill="#000"/><line x1="157.5" y1="834" x2="157.5" y2="849" stroke="#000"/><rect x="162.5" y="855.5" width="2" height="9" fill="none" stroke="#000"/><line x1="163.5" y1="841" x2="163.5" y2="856" stroke="#000"/><rect x="169" y="853" width="2" height="11" fill="#000"/><line x1="170.5" y1="836" x2="170.5" y2="854" stroke="#000"/><rect x="175.5" y="852.5" width="2" height="12" fill="none" stroke="#000"/><line x1="176.5" y1="845" x2="176.5" y2="853" stroke="#000"/><rect x="181.5" y="855.5" width="2" height="9" fill="none" stroke="#000"/><line x1="182.5" y1="847" x2="182.5" y2="856" stroke="#000"/><rect x="187.5" y="851.5" width="2" height="13" fill="none" stroke="#000"/><line x1="188.5" y1="837" x2="188.5" y2="852" stroke="#000"/><rect x="194.5" y="850.5" width="2" height="14" fill="none" stroke="#000"/><line x1="195.5" y1="842" x2="195.5" y2="851" stroke="#000"/><rect x="200.5" y="855.5" width="2" height="9" fill="none" stroke="#000"/><line x1="201.5" y1="846" x2="201.5" y2="856" stroke="#000"/><rect x="206.5" y="855.5" width="2" height="9" fill="none" stroke="#000"/><line x1="207.5" y1="848" x2="207.5" y2="856" stroke="#000"/><rect x="212.5" y="848.5" width="2" height="16" fill="none" stroke="#000"/><line x1="213.5" y1="838" x2="213.5" y2="849" stroke="#000"/><rect x="219.5" y="854.5" width="2" height="10" fill="none" stroke="#000"/><line x1="220.5" y1="842" x2="220.5" y2="855" stroke="#000"/><rect x="225.5" y="846.5" width="2" height="18" fill="none" stroke="#000"/><line x1="226.5" y1="840" x2="226.5" y2="847" stroke="#000"/><rect x="231.5" y="846.5" width="2" height="18" fill="none" stroke="#000"/><line x1="232.5" y1="836" x2="232.5" y2="847" stroke="#000"/><rect x="237" y="848" width="2" height="16" fill="#000"/><line x1="238.5" y1="834" x2="238.5" y2="849" stroke="#000"/><rect x="243" y="850" width="2" height="14" fill="#000"/><line x1="244.5" y1="833" x2="244.5" y2="851" stroke="#000"/><rect x="250.5" y="851.5" width="2" height="13" fill="none" stroke="#000"/><line x1="251.5" y1="845" x2="251.5" y2="852" stroke="#000"/><rect x="256.5" y="848.5" width="2" height="16" fill="none" stroke="#000"/><line x1="257.5" y1="842" x2="257.5" y2="849" stroke="#000"/><rect x="262.5" y="849.5" width="2" height="15" fill="none" stroke="#000"/><line x1="263.5" y1="842" x2="263.5" y2="850" stroke="#000"/><rect x="268.5" y="849.5" width="2" height="15" fill="none" stroke="#000"/><line x1="269.5" y1="839" x2="269.5" y2="850" stroke="#000"/><rect x="275.5" y="846.5" width="2" height="18" fill="none" stroke="#000"/><line x1="276.5" y1="832" x2="276.5" y2="847" stroke="#000"/><rect x="281.5" y="856.5" width="2" height="8" fill="none" stroke="#000"/><line x1="282.5" y1="848" x2="282.5" y2="857" stroke="#000"/><rect x="287.5" y="848.5" width="2" height="16" fill="none" stroke="#000"/><line x1="288.5" y1="832" x2="288.5" y2="849" stroke="#000"/><rect x="293.5" y="850.5" width="2" height="14" fill="none" stroke="#000"/><line x1="294.5" y1="838" x2="294.5" y2="851" stroke="#000"/><rect x="306.5" y="853.5" width="2" height="11" fill="none" stroke="#000"/><line x1="307.5" y1="841" x2="307.5" y2="854" stroke="#000"/><rect x="312" y="850" width="2" height="14" fill="#000"/><line x1="313.5" y1="841" x2="313.5" y2="850" stroke="#000"/><rect x="318.5" y="855.5" width="2" height="9" fill="none" stroke="#000"/><line x1="319.5" y1="847" x2="319.5" y2="856" stroke="#000"/><rect x="325.5" y="849.5" width="2" height="15" fill="none" stroke="#000"/><line x1="326.5" y1="834" x2="326.5" y2="850" stroke="#000"/><rect x="331.5" y="855.5" width="2" height="9" fill="none" stroke="#000"/><line x1="332.5" y1="844" x2="332.5" y2="856" stroke="#000"/><rect x="337.5" y="851.5" width="2" height="13" fill="none" stroke="#000"/><line x1="338.5" y1="837" x2="338.5" y2="852" stroke="#000"/><rect x="343.5" y="855.5" width="2" height="9" fill="none" stroke="#000"/><line x1="344.5" y1="841" x2="344.5" y2="856" stroke="#000"/><rect x="349.5" y="853.5" width="2" height="11" fill="none" stroke="#000"/><line x1="350.5" y1="844" x2="350.5" y2="854" stroke="#000"/><rect x="356" y="853" width="2" height="11" fill="#000"/><line x1="357.5" y1="840" x2="357.5" y2="854" stroke="#000"/><rect x="362.5" y="848.5" width="2" height="16" fill="none" stroke="#000"/><line x1="363.5" y1="838" x2="363.5" y2="849" stroke="#000"/><rect x="368.5" y="846.5" width="2" height="18" fill="none" stroke="#000"/><line x1="369.5" y1="832" x2="369.5" y2="847" stroke="#000"/><rect x="374.5" y="853.5" width="2" height="11" fill="none" stroke="#000"/><line x1="375.5" y1="836" x2="375.5" y2="854" stroke="#000"/><rect x="381.5" y="846.5" width="2" height="18" fill="none" stroke="#000"/><line x1="382.5" y1="829" x2="382.5" y2="847" stroke="#000"/><rect x="387.5" y="847.5" width="2" height="17" fill="none" stroke="#000"/><line x1="388.5" y1="835" x2="388.5" y2="848" stroke="#000"/><rect x="393.5" y="855.5" width="2" height="9" fill="none" stroke="#000"/><line x1="394.5" y1="837" x2="394.5" y2="856" stroke="#000"/><rect x="399.5" y="855.5" width="2" height="9" fill="none" stroke="#000"/><line x1="400.5" y1="846" x2="400.5" y2="856" stroke="#000"/><rect x="406.5" y="848.5" width="2" height="16" fill="none" stroke="#000"/><line x1="407.5" y1="841" x2="407.5" y2="849" stroke="#000"/><rect x="412.5" y="853.5" width="2" height="11" fill="none" stroke="#000"/><line x1="413.5" y1="834" x2="413.5" y2="854" stroke="#000"/><rect x="418" y="852" width="2" height="12" fill="#000"/><line x1="419.5" y1="841" x2="419.5" y2="852" stroke="#000"/><rect x="424.5" y="855.5" width="2" height="9" fill="none" stroke="#000"/><line x1="425.5" y1="842" x2="425.5" y2="856" stroke="#000"/><rect x="431.5" y="847.5" width="2" height="17" fill="none" stroke="#000"/><line x1="432.5" y1="836" x2="432.5" y2="848" stroke="#000"/><rect x="437.5" y="853.5" width="2" height="11" fill="none" stroke="#000"/><line x1="438.5" y1="836" x2="438.5" y2="854" stroke="#000"/><rect x="443.5" y="855.5" width="2" height="9" fill="none" stroke="#000"/><line x1="444.5" y1="838" x2="444.5" y2="856" stroke="#000"/><rect x="449.5" y="849.5" width="2" height="15" fill="none" stroke="#000"/><line x1="450.5" y1="833" x2="450.5" y2="850" stroke="#000"/><rect x="455.5" y="851.5" width="2" height="13" fill="none" stroke="#000"/><line x1="456.5" y1="841" x2="456.5" y2="852" stroke="#000"/><rect x="462.5" y="847.5" width="2" height="17" fill="none" stroke="#000"/><line x1="463.5" y1="839" x2="463.5" y2="848" stroke="#000"/><rect x="468" y="854" width="2" height="10" fill="#000"/><line x1="469.5" y1="845" x2="469.5" y2="854" stroke="#000"/><rect x="474" y="851" width="2" height="13" fill="#000"/><line x1="475.5" y1="841" x2="475.5" y2="851" stroke="#000"/></g><g shape-rendering="crispEdges"><rect x="300" y="800" width="1" height="32" fill="#000"/><rect x="299.5" y="719.5" width="2" height="145" fill="none" stroke="#f00"/><line x1="300.5" y1="573" x2="300.5" y2="720" stroke="#f00"/></g><line x1="138.5" y1="864" x2="138.5" y2="859" class="t"/><line x1="138.5" y1="512" x2="138.5" y2="517" class="t"/><line x1="213.5" y1="864" x2="213.5" y2="859" class="t"/><line x1="213.5" y1="512" x2="213.5" y2="517" class="t"/><line x1="288.5" y1="864" x2="288.5" y2="859" class="t"/><line x1="288.5" y1="512" x2="288.5" y2="517" class="t"/><line x1="362.5" y1="864" x2="362.5" y2="859" class="t"/><line x1="362.5" y1="512" x2="362.5" y2="517" class="t"/><line x1="437.5" y1="864" x2="437.5" y2="859" class="t"/><line x1="437.5" y1="512" x2="437.5" y2="517" class="t"/><line x1="64" y1="793.5" x2="69" y2="793.5" class="t"/><line x1="512" y1="793.5" x2="507" y2="793.5" class="t"/><line x1="64" y1="723.5" x2="69" y2="723.5" class="t"/><line x1="512" y1="723.5" x2="507" y2="723.5" class="t"/><line x1="64" y1="653.5" x2="69" y2="653.5" class="t"/><line x1="512" y1="653.5" x2="507" y2="653.5" class="t"/><line x1="64" y1="583.5" x2="69" y2="583.5" class="t"/><line x1="512" y1="583.5" x2="507" y2="583.5" class="t"/><line x1="64" y1="513.5" x2="69" y2="513.5" class="t"/><line x1="512" y1="513.5" x2="507" y2="513.5" class="t"/><path d="M64.5,864 V512.5 H511.5 V864" fill="none" stroke="#000" shape-rendering="crispEdges"/><line x1="64" y1="864.5" x2="512" y2="864.5" stroke="#f00" shape-rendering="crispEdges"/><g class="lab"><text x="66.0" y="469" text-anchor="middle">0</text><text x="141.0" y="469" text-anchor="middle">200</text><text x="216.0" y="469" text-anchor="middle">400</text><text x="291.0" y="469" text-anchor="middle">600</text><text x="366.0" y="469" text-anchor="middle">800</text><text x="441.0" y="469" text-anchor="middle">1000</text><text x="516.0" y="469" text-anchor="middle">1200</text><text x="61.5" y="459.0" text-anchor="end">2</text><text x="61.5" y="402.0" text-anchor="end">3</text><text x="61.5" y="345.0" text-anchor="end">4</text><text x="61.5" y="289.0" text-anchor="end">5</text><text x="61.5" y="232.0" text-anchor="end">6</text><text x="61.5" y="175.0" text-anchor="end">7</text><text x="61.5" y="119.0" text-anchor="end">8</text><text x="65.5" y="110">x</text><text x="77" y="110">10</text><text x="89" y="99">6</text><text x="67.5" y="879.5" text-anchor="end">&#8722;6</text><text x="141.5" y="879.5" text-anchor="end">&#8722;4</text><text x="216.5" y="879.5" text-anchor="end">&#8722;2</text><text x="287.5" y="879.5" text-anchor="middle">0</text><text x="361.5" y="879.5" text-anchor="middle">2</text><text x="436.5" y="879.5" text-anchor="middle">4</text><text x="511.5" y="879.5" text-anchor="middle">6</text><text x="59.5" y="869.0" text-anchor="end">0</text><text x="59.5" y="798.0" text-anchor="end">50</text><text x="59.5" y="728.0" text-anchor="end">100</text><text x="59.5" y="658.0" text-anchor="end">150</text><text x="59.5" y="588.0" text-anchor="end">200</text><text x="59.5" y="518.0" text-anchor="end">250</text></g></svg></div>
<!-- controls -->
<div class="btn" style="left:541px;top:78px;width:151px;height:37px;border:1px solid #b4507c;box-shadow:inset 1px 1px 0 #e8eef0, inset -1px -1px 0 #5e646c;"><div class="bt nolcd" style="top:11px;letter-spacing:-0.6px;">Reset</div></div>
<div class="btn" style="left:542px;top:130px;width:149px;height:35px;box-shadow:inset 0 -1px 0 #5e646c;border-bottom-color:#e8e8ec;"><div class="bt nolcd" style="top:9px;letter-spacing:-0.1px;">Store y0</div></div>
<div class="pop" style="left:541px;top:214px;width:151px;height:23px;"><div class="in"></div><div class="arr" style="left:138px;top:8px;"></div></div>
<div class="lbl nolcd" style="left:543px;top:219px;letter-spacing:-0.65px;">GlnL1OF</div>
<div class="lbl nolcd" style="left:551px;top:264px;letter-spacing:-0.35px;">SatID</div>
<div class="pop" style="left:590px;top:264px;width:101px;height:23px;"><div class="in"></div><div class="arr" style="left:88px;top:8px;"></div></div>
<div class="lbl nolcd" style="left:592px;top:268px;letter-spacing:1px;">11</div>
<div class="lbl nolcd" style="left:558px;top:314px;">T</div><div class="lbl nolcd" style="left:568px;top:314px;">=</div>
<div class="pop flat" style="left:591px;top:314px;width:101px;height:23px;"><div class="in"></div><div class="arr" style="left:88px;top:8px;"></div></div>
<div class="lbl nolcd" style="left:593px;top:318px;">5</div>
<div class="lbl nolcd" style="left:553px;top:354px;letter-spacing:0.5px;">NN=</div>
<div class="edit" style="left:591px;top:349px;width:100px;height:25px;">
  <div class="abs" style="left:0;top:0;width:100px;height:1px;background:#a9adc0;"></div>
  <div class="abs" style="left:0;top:1px;width:99px;height:1px;background:#5c6070;"></div>
  <div class="abs" style="left:0;top:1px;width:1px;height:3px;background:#5c6070;"></div>
  <div class="abs" style="left:2px;top:24px;width:97px;height:1px;background:#e6e6ee;"></div>
  <div class="abs" style="left:98px;top:2px;width:1px;height:23px;background:#e6e6ee;"></div>
</div>
<div class="lbl nolcd" style="left:591px;top:355px;width:100px;text-align:center;">32</div>
<div class="lbl nolcd" style="left:554px;top:399px;">NF=</div>
<div class="edit" style="left:592px;top:389px;width:100px;height:25px;">
  <div class="abs" style="left:0;top:0;width:100px;height:1px;background:#a9adc0;"></div>
  <div class="abs" style="left:0;top:1px;width:99px;height:1px;background:#5c6070;"></div>
  <div class="abs" style="left:0;top:1px;width:1px;height:9px;background:#5c6070;"></div>
  <div class="abs" style="left:1px;top:23px;width:98px;height:1px;background:#e6e6ee;"></div>
  <div class="abs" style="left:98px;top:2px;width:1px;height:22px;background:#e6e6ee;"></div>
</div>
<div class="lbl nolcd" style="left:592px;top:395px;width:100px;text-align:center;">61</div>
<div class="btn" style="left:542px;top:437px;width:149px;height:27px;box-shadow:inset 0 -1px 0 #5e646c;border-bottom-color:#e8e8ec;"><div class="bt nolcd" style="top:6px;left:-2px;letter-spacing:-1.1px;">Send</div></div>
<div class="lbl nolcd" style="left:542px;top:492px;letter-spacing:0.06px;">Pd=9.806e&#8722;01</div>
<div class="lbl nolcd" style="left:542px;top:541px;letter-spacing:0.1px;">Pf=9.97e&#8722;04</div>
<div class="lbl nolcd" style="left:542px;top:586px;letter-spacing:0.5px;">h=3.181e+06</div>
<div class="pop flat" style="left:540px;top:639px;width:151px;height:23px;"><div class="in"></div><div class="arr" style="left:138px;top:8px;"></div></div>
<div class="lbl nolcd" style="left:542px;top:643px;letter-spacing:-0.07px;">HistFreq</div>
</body></html>
